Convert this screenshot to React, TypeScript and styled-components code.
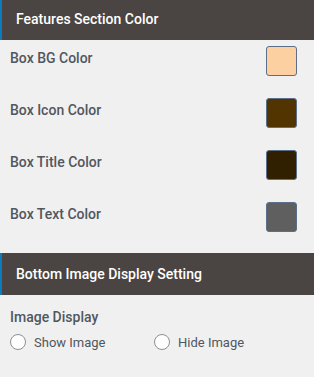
import React, { useState } from 'react';
import styled, { createGlobalStyle } from 'styled-components';

const GlobalStyle = createGlobalStyle`
  html, body {
    margin: 0;
    padding: 0;
    background: #f0f0f1;
  }
  body {
    font-family: Roboto, "Noto Sans", "Liberation Sans", sans-serif;
  }
`;

const swatches = [
  { label: 'Box BG Color', color: '#fcd0a1' },
  { label: 'Box Icon Color', color: '#523400' },
  { label: 'Box Title Color', color: '#302000' },
  { label: 'Box Text Color', color: '#5f5f5f' },
];

const App = () => {
  const [display, setDisplay] = useState('');

  return (
    <Panel>
      <GlobalStyle />
      <SectionHeader first>Features Section Color</SectionHeader>
      <ColorList>
        {swatches.map((item) => (
          <ColorRow key={item.label}>
            <Label>{item.label}</Label>
            <Swatch color={item.color} />
          </ColorRow>
        ))}
      </ColorList>
      <SectionHeader>Bottom Image Display Setting</SectionHeader>
      <Field>
        <Label>Image Display</Label>
        <RadioGroup>
          <RadioLabel>
            <Radio
              type="radio"
              name="display"
              checked={display === 'show'}
              onChange={() => setDisplay('show')}
            />
            Show Image
          </RadioLabel>
          <RadioLabel>
            <Radio
              type="radio"
              name="display"
              checked={display === 'hide'}
              onChange={() => setDisplay('hide')}
            />
            Hide Image
          </RadioLabel>
        </RadioGroup>
      </Field>
    </Panel>
  );
};

export default App;

const Panel = styled.div`
  width: 314px;
  height: 377px;
  overflow: hidden;
  background: #f0f0f1;
`;

const SectionHeader = styled.div<{ first?: boolean }>`
  height: 42px;
  margin-top: ${(p) => (p.first ? '-2px' : '0')};
  box-sizing: border-box;
  display: flex;
  align-items: center;
  padding-left: 14px;
  border-left: 2px solid #0a7cc0;
  background: #4a4442;
  color: #ffffff;
  font-size: 14px;
  font-weight: 500;
`;

const ColorList = styled.div`
  display: flex;
  flex-direction: column;
  gap: 22px;
  padding: 6px 17px 21px 10px;
`;

const ColorRow = styled.div`
  display: flex;
  align-items: center;
  justify-content: space-between;
  height: 30px;
`;

const Label = styled.div`
  color: #50575e;
  font-size: 14px;
  font-weight: 500;
  margin-top: -6px;
`;

const Swatch = styled.div<{ color: string }>`
  width: 31px;
  height: 30px;
  box-sizing: border-box;
  border: 1px solid #5b7088;
  border-radius: 3px;
  background: ${(p) => p.color};
`;

const Field = styled.div`
  display: flex;
  flex-direction: column;
  gap: 9px;
  padding: 14px 10px 0 10px;
  ${Label} {
    margin-top: 0;
  }
`;

const RadioGroup = styled.div`
  display: flex;
`;

const RadioLabel = styled.label`
  display: flex;
  align-items: center;
  gap: 8px;
  width: 144px;
  color: #50575e;
  font-size: 13px;
`;

const Radio = styled.input`
  appearance: none;
  margin: 0;
  width: 16px;
  height: 16px;
  border: 1px solid #8c8f94;
  border-radius: 50%;
  background: #ffffff;
`;
